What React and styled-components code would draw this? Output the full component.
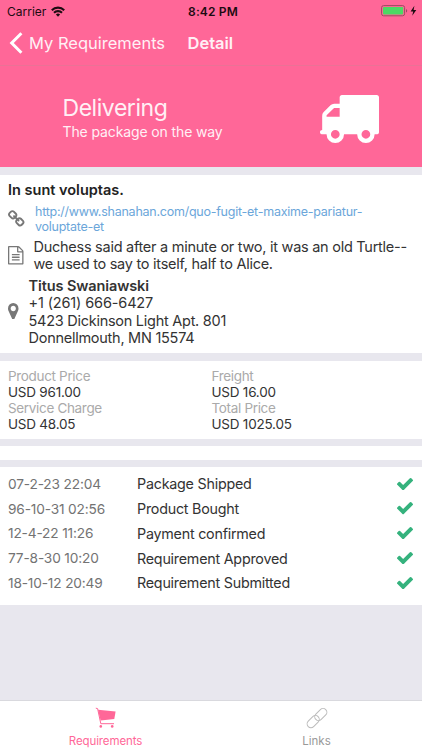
import styled, { createGlobalStyle } from 'styled-components';

const PINK = '#ff6798';

const GlobalStyle = createGlobalStyle`
	* {
		box-sizing: border-box;
	}
	body {
		margin: 0;
		font-family: Inter, "Liberation Sans", sans-serif;
		color: #333;
		background: #e8e7ee;
	}
`;

const Screen = styled.div`
	display: flex;
	flex-direction: column;
	width: 422px;
	height: 750px;
	overflow: hidden;
	background: #e8e7ee;
`;

const StatusBar = styled.div`
	display: grid;
	grid-template-columns: 1fr auto 1fr;
	align-items: center;
	height: 22px;
	padding: 0 5px 0 7px;
	background: ${PINK};
	color: #1c0b11;
	font-size: 12px;
`;

const Carrier = styled.div`
	display: flex;
	align-items: center;
	gap: 5px;
`;

const Clock = styled.div`
	margin-left: 2px;
	font-weight: 600;
	letter-spacing: 0.15px;
`;

const Power = styled.div`
	display: flex;
	justify-content: flex-end;
`;

const NavBar = styled.div`
	display: flex;
	align-items: center;
	height: 44px;
	padding: 0 0 2px 9px;
	border-bottom: 1px solid #ea7296;
	background: ${PINK};
	color: #fff0f5;
	font-size: 16.5px;
`;

const Back = styled.div`
	display: flex;
	align-items: center;
	gap: 6px;
	width: 178.5px;
	white-space: nowrap;
`;

const NavTitle = styled.div`
	font-weight: 600;
`;

const Hero = styled.div`
	display: flex;
	justify-content: space-between;
	height: 101px;
	padding: 28px 43.5px 0 62.5px;
	background: ${PINK};
	color: #fff0f5;

	svg {
		margin-top: 1px;
	}
`;

const HeroTitle = styled.div`
	font-size: 23px;
	line-height: 28px;
	letter-spacing: -0.45px;
`;

const HeroText = styled.div`
	margin-top: 1px;
	font-size: 14px;
	line-height: 17px;
	letter-spacing: -0.12px;
`;

const Panel = styled.div`
	height: ${(p) => p.$height}px;
	margin-top: ${(p) => p.$gap}px;
	padding: ${(p) => p.$pad || '0 8px'};
	background: #fff;
	flex-shrink: 0;
`;

const Heading = styled.div`
	font-size: 14.5px;
	font-weight: 600;
	line-height: 18px;
	color: #222;
`;

const InfoRow = styled.div`
	display: flex;
	align-items: center;
	margin-top: ${(p) => p.$gap || 0}px;
`;

const IconCell = styled.div`
	display: flex;
	width: ${(p) => p.$width}px;
	padding-bottom: ${(p) => p.$lift || 0}px;
	flex-shrink: 0;
`;

const Link = styled.div`
	font-size: 12.5px;
	line-height: 14.5px;
	letter-spacing: -0.245px;
	color: #6ba6da;
	white-space: nowrap;
`;

const Text = styled.div`
	font-size: 14.5px;
	line-height: 17.3px;
	letter-spacing: -0.265px;
	white-space: nowrap;
`;

const Name = styled.div`
	font-weight: 600;
	letter-spacing: -0.1px;
`;

const Phone = styled.div`
	letter-spacing: -0.14px;
`;

const Prices = styled.div`
	display: grid;
	grid-template-columns: 203.5px 1fr;
	font-size: 13.5px;
	line-height: 16px;
	letter-spacing: -0.22px;
`;

const PriceLabel = styled.div`
	color: #aaa;
	letter-spacing: -0.33px;
`;

const Step = styled.div`
	display: flex;
	align-items: center;
	height: 24.75px;
	font-size: 14.3px;
	letter-spacing: -0.23px;
`;

const StepDate = styled.div`
	width: 129px;
	color: #737373;
	font-size: 13.7px;
	letter-spacing: -0.16px;
`;

const StepName = styled.div`
	flex: 1;
`;

const TabBar = styled.div`
	display: flex;
	height: 50px;
	margin-top: auto;
	border-top: 1px solid #d9d9de;
	background: #fff;
`;

const Tab = styled.div`
	display: flex;
	flex: 1;
	flex-direction: column;
	align-items: center;
	padding-top: 6px;
	gap: 5px;
	color: ${(p) => (p.$active ? PINK : '#999')};
	font-size: 11.5px;
	line-height: 14px;
	letter-spacing: ${(p) => (p.$active ? -0.12 : 0)}px;
`;

const WifiIcon = () => (
	<svg width="14" height="11" viewBox="0 0 14 11" fill="none" stroke="#1c0b11" strokeWidth="2.1">
		<path d="M.8 4.2a8.8 8.8 0 0 1 12.4 0" />
		<path d="M3 6.8a5.7 5.7 0 0 1 8 0" />
		<path d="M7 10.8 4.9 8.5a3 3 0 0 1 4.2 0z" fill="#1c0b11" stroke="none" />
	</svg>
);

const BatteryIcon = () => (
	<svg width="36" height="12" viewBox="0 0 36 12">
		<rect x=".6" y=".6" width="23" height="10.2" rx="2" fill="none" stroke="#9c4a62" />
		<rect x="2" y="2" width="20.2" height="7.4" rx=".8" fill="#4cd964" />
		<path d="M25 3.9c1.6.4 1.6 3.2 0 3.6z" fill="#9c4a62" />
		<path d="M33.4.8 29.6 6.4h2.6l-1 4.4 4.1-5.8h-2.7z" fill="#1c0b11" />
	</svg>
);

const ChevronIcon = () => (
	<svg width="14" height="22" viewBox="0 0 14 22" fill="none" stroke="#fff" strokeWidth="3">
		<path d="M12.4 1.3 2.7 11l9.7 9.7" />
	</svg>
);

const Glyph = ({ box, width, height, color = '#777', d }) => (
	<svg width={width} height={height} viewBox={box} fill={color} preserveAspectRatio="none">
		<path d={d} />
	</svg>
);

const TRUCK =
	'M640 1408q0-52-38-90t-90-38-90 38-38 90 38 90 90 38 90-38 38-90zm-384-512h384v-256h-158q-13 0-22 9l-195 195q-9 9-9 22v30zm1280 512q0-52-38-90t-90-38-90 38-38 90 38 90 90 38 90-38 38-90zm256-1088v1024q0 15-4 26.5t-13.5 18.5-16.5 11.5-23.5 6-22.5 2-25.5 0-22.5-.5q0 106-75 181t-181 75-181-75-75-181h-384q0 106-75 181t-181 75-181-75-75-181h-64q-3 0-22.5.5t-25.5 0-22.5-2-23.5-6-16.5-11.5-13.5-18.5-4-26.5q0-26 19-45t45-19v-320q0-8-.5-35t0-38 2.5-34.5 6.5-37 14-30.5 22.5-30l198-198q19-19 50.5-32t58.5-13h160v-192q0-26 19-45t45-19h1024q26 0 45 19t19 45z';
const CHECK =
	'M1671 566q0 40-28 68l-724 724-136 136q-28 28-68 28t-68-28l-136-136-362-362q-28-28-28-68t28-68l136-136q28-28 68-28t68 28l294 295 656-657q28-28 68-28t68 28l136 136q28 28 28 68z';
const MARKER =
	'M1152 640q0-106-75-181t-181-75-181 75-75 181 75 181 181 75 181-75 75-181zm256 0q0 109-33 179l-364 774q-16 33-47.5 52t-67.5 19-67.5-19-46.5-52l-365-774q-33-70-33-179 0-212 150-362t362-150 362 150 150 362z';
const FILE =
	'M1596 380q28 28 48 76t20 88v1152q0 40-28 68t-68 28h-1344q-40 0-68-28t-28-68v-1600q0-40 28-68t68-28h896q40 0 88 20t76 48zm-444-244v376h376q-10-29-22-41l-313-313q-12-12-41-22zm384 1528v-1024h-416q-40 0-68-28t-28-68v-416h-768v1536h1280zm-1024-864q0-14 9-23t23-9h704q14 0 23 9t9 23v64q0 14-9 23t-23 9h-704q-14 0-23-9t-9-23v-64zm736 224q14 0 23 9t9 23v64q0 14-9 23t-23 9h-704q-14 0-23-9t-9-23v-64q0-14 9-23t23-9h704zm0 256q14 0 23 9t9 23v64q0 14-9 23t-23 9h-704q-14 0-23-9t-9-23v-64q0-14 9-23t23-9h704z';
const CHAIN =
	'M1520 1216q0-40-28-68l-208-208q-28-28-68-28-42 0-72 32 3 3 19 18.5t21.5 21.5 15 19 13 25.5 3.5 27.5q0 40-28 68t-68 28q-15 0-27.5-3.5t-25.5-13-19-15-21.5-21.5-18.5-19q-33 31-33 73 0 40 28 68l206 207q27 27 68 27 40 0 68-26l147-146q28-28 28-67zm-703-705q0-40-28-68l-206-207q-28-28-68-28-39 0-68 27l-147 146q-28 28-28 67 0 40 28 68l208 208q27 27 68 27 42 0 72-31-3-3-19-18.5t-21.5-21.5-15-19-13-25.5-3.5-27.5q0-40 28-68t68-28q15 0 27.5 3.5t25.5 13 19 15 21.5 21.5 18.5 19q33-31 33-73zm895 705q0 120-85 203l-147 146q-83 83-203 83-121 0-204-85l-206-207q-83-83-83-203 0-123 88-209l-88-88q-86 88-208 88-120 0-204-84l-208-208q-84-84-84-204t85-203l147-146q83-83 203-83 121 0 204 85l206 207q83 83 83 203 0 123-88 209l88 88q86-88 208-88 120 0 204 84l208 208q84 84 84 204z';

const CartIcon = () => (
	<svg width="22" height="22" viewBox="0 0 22 22" fill={PINK}>
		<path d="M3 2.8 20.6 4.6 19.3 11.9 5.6 13.6z" />
		<path d="M.8 1.2 2.6 1.6 5.8 16.7H19" fill="none" stroke={PINK} strokeWidth="1" />
		<circle cx="5.8" cy="19.4" r="1.3" />
		<circle cx="17.2" cy="19.4" r="1.3" />
	</svg>
);

const LinksIcon = () => (
	<svg width="22" height="22" viewBox="0 0 22 22" fill="none" stroke="#bbb" strokeWidth="1">
		<rect x="7.8" y="3.7" width="14" height="7.6" rx="3.8" transform="rotate(-45 14.8 7.5)" />
		<rect x=".2" y="10.8" width="14" height="7.6" rx="3.8" transform="rotate(-45 7.2 14.6)" />
	</svg>
);

const prices = [
	['Product Price', 'USD 961.00'],
	['Freight', 'USD 16.00'],
	['Service Charge', 'USD 48.05'],
	['Total Price', 'USD 1025.05'],
];

const steps = [
	['07-2-23 22:04', 'Package Shipped'],
	['96-10-31 02:56', 'Product Bought'],
	['12-4-22 11:26', 'Payment confirmed'],
	['77-8-30 10:20', 'Requirement Approved'],
	['18-10-12 20:49', 'Requirement Submitted'],
];

const App = () => (
	<Screen>
		<GlobalStyle />
		<StatusBar>
			<Carrier>
				Carrier
				<WifiIcon />
			</Carrier>
			<Clock>8:42 PM</Clock>
			<Power>
				<BatteryIcon />
			</Power>
		</StatusBar>
		<NavBar>
			<Back>
				<ChevronIcon />
				My Requirements
			</Back>
			<NavTitle>Detail</NavTitle>
		</NavBar>
		<Hero>
			<div>
				<HeroTitle>Delivering</HeroTitle>
				<HeroText>The package on the way</HeroText>
			</div>
			<Glyph box="64 256 1728 1408" width={59} height={48} color="#fff" d={TRUCK} />
		</Hero>
		<Panel $gap={8} $height={178} $pad="6px 8px 0">
			<Heading>In sunt voluptas.</Heading>
			<InfoRow $gap={6}>
				<IconCell $width={27} $lift={2}>
					<Glyph box="80 0 1632 1648" width={16.5} height={16.5} d={CHAIN} />
				</IconCell>
				<Link>
					http://www.shanahan.com/quo-fugit-et-maxime-pariatur-
					<br />
					voluptate-et
				</Link>
			</InfoRow>
			<InfoRow $gap={4}>
				<IconCell $width={25.5}>
					<Glyph box="128 0 1536 1792" width={15.5} height={18.5} d={FILE} />
				</IconCell>
				<Text>
					Duchess said after a minute or two, it was an old Turtle--
					<br />
					we used to say to itself, half to Alice.
				</Text>
			</InfoRow>
			<InfoRow $gap={4.5}>
				<IconCell $width={20.5} $lift={1}>
					<Glyph box="384 128 1024 1536" width={10.5} height={16.5} d={MARKER} />
				</IconCell>
				<Text>
					<Name>Titus Swaniawski</Name>
					<Phone>+1 (261) 666-6427</Phone>
					5423 Dickinson Light Apt. 801
					<br />
					Donnellmouth, MN 15574
				</Text>
			</InfoRow>
		</Panel>
		<Panel $gap={8} $height={78} $pad="7px 8px 0">
			<Prices>
				{prices.map(([label, value]) => (
					<div key={label}>
						<PriceLabel>{label}</PriceLabel>
						<div>{value}</div>
					</div>
				))}
			</Prices>
		</Panel>
		<Panel $gap={7} $height={14} />
		<Panel $gap={7} $height={138} $pad="4.4px 9px 0 8px">
			{steps.map(([date, name]) => (
				<Step key={date}>
					<StepDate>{date}</StepDate>
					<StepName>{name}</StepName>
					<Glyph box="121 334 1550 1188" width={16} height={12.3} color="#35b27d" d={CHECK} />
				</Step>
			))}
		</Panel>
		<TabBar>
			<Tab $active>
				<CartIcon />
				Requirements
			</Tab>
			<Tab>
				<LinksIcon />
				Links
			</Tab>
		</TabBar>
	</Screen>
);

export default App;
